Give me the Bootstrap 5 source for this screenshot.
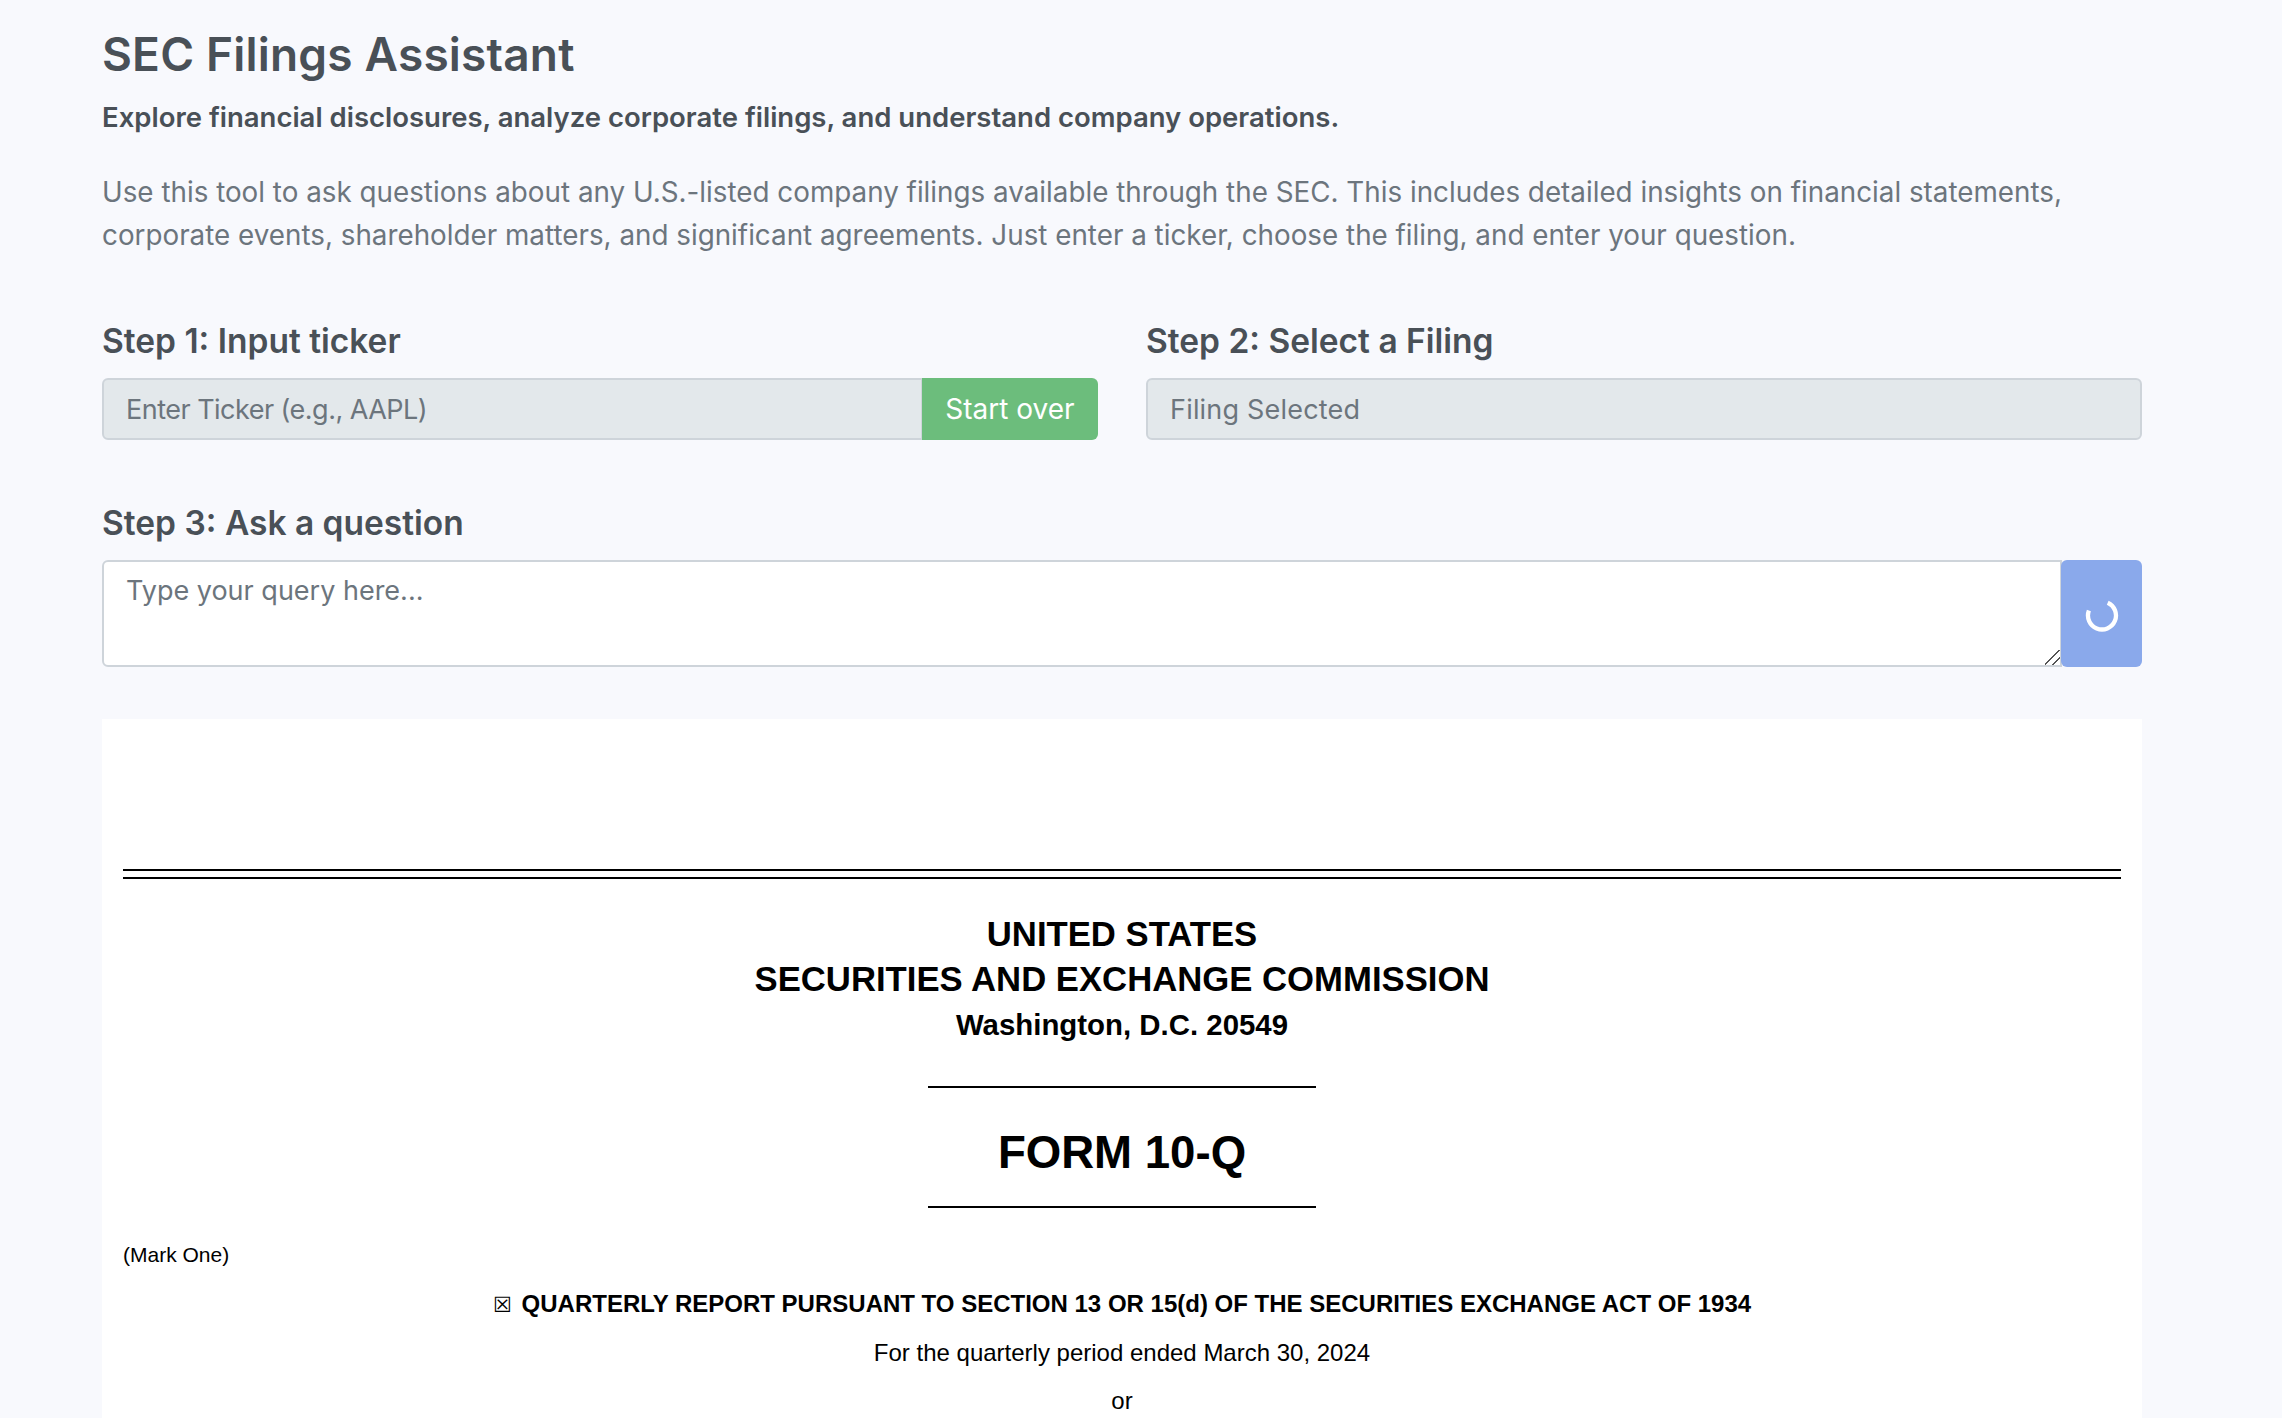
<!DOCTYPE html>
<html lang="en">
<head>
<meta charset="utf-8">
<title>SEC Filings Assistant</title>
<link href="https://cdn.jsdelivr.net/npm/bootstrap@5.3.0/dist/css/bootstrap.min.css" rel="stylesheet">
<style>
html,body{height:100%;overflow:hidden}
body{background:#f8f9fd;font-family:Inter,"Noto Sans",sans-serif;color:#495057}
.page-wrap{padding:0 140px 0 102px;height:100vh}
.app-title{font-size:46px;font-weight:600;line-height:48px;margin:0;padding-top:30px;color:#495057;letter-spacing:.2px}
.app-sub{font-size:27.5px;font-weight:600;line-height:38px;margin:20px 0 0;color:#495057}
.app-desc{font-size:27.8px;line-height:43px;margin:35px 0 0;color:#6c757d}
.steps{--bs-gutter-x:48px;margin-top:63px}
.step-label{font-size:33.5px;font-weight:600;line-height:42px;margin-bottom:16px;color:#495057;display:block}
.step-input{height:62px;font-size:27px;padding:0 22px;background:#e3e8eb;border-color:#ced4da;border-width:2px;color:#6c757d;border-radius:6px}
.step-input::placeholder,.step-text::placeholder{color:#6c757d;opacity:1}
.step-input:disabled{background:#e3e8eb}
.ticker-input::placeholder{letter-spacing:-.52px}
.filing-input::placeholder{letter-spacing:.2px}
.btn-over{background:#6cbd7c;border:0;color:#fff;font-size:28px;width:176px;height:62px;padding:0;border-radius:0 6px 6px 0;opacity:1;flex-shrink:0}
.step-three{margin-top:62px}
.step-text{height:107px;font-size:27px;padding:9px 22px;border:2px solid #ced4da;background:#fff;border-radius:6px 0 0 6px}
.step-text::-webkit-resizer{background:linear-gradient(135deg,transparent 46%,#555 46%,#555 53%,transparent 53%,transparent 72%,#555 72%,#555 79%,transparent 79%)}
.btn-ask{width:81px;height:107px;margin-left:-1px;background:#8aa9eb;border:0;padding:0;border-radius:6px;opacity:1;flex-shrink:0}
.btn-ask:disabled{background:#8aa9eb;opacity:1}
.filing-box{background:#fff;margin-top:52px;padding:150px 21px 0;font-family:"Liberation Sans",Arial,sans-serif;color:#000;min-height:0;overflow:hidden}
.rule-double{border-top:2px solid #000;border-bottom:2px solid #000;height:10px}
.doc-head{margin-top:33px}
.doc-h1{font-size:34.7px;font-weight:700;line-height:45px;margin:0}
.doc-h2{font-size:29.4px;font-weight:700;line-height:45px;margin:0}
.rule-short{width:388px;border-top:2px solid #000;margin:0 auto}
.rule-first{margin-top:39px}
.doc-form{font-size:45.6px;font-weight:700;line-height:58px;margin:36px 0 24px}
.doc-plain{font-size:24px;line-height:48px;margin:0}
.doc-bold{font-size:24px;font-weight:700;line-height:48px;margin:12px 0 0}
.doc-mark{font-size:21px;line-height:26px;margin:34px 0 0}
.check-glyph{font-weight:400;font-size:21px;margin-right:3px}
</style>
</head>
<body>
<main class="page-wrap d-flex flex-column">
  <h1 class="app-title">SEC Filings Assistant</h1>
  <p class="app-sub">Explore financial disclosures, analyze corporate filings, and understand company operations.</p>
  <p class="app-desc">Use this tool to ask questions about any U.S.-listed company filings available through the SEC. This includes detailed insights on financial statements, corporate events, shareholder matters, and significant agreements. Just enter a ticker, choose the filing, and enter your question.</p>

  <div class="row steps">
    <div class="col-6">
      <label class="step-label" for="ticker">Step 1: Input ticker</label>
      <div class="input-group">
        <input id="ticker" class="form-control step-input ticker-input" placeholder="Enter Ticker (e.g., AAPL)" disabled>
        <button class="btn btn-over" type="button">Start over</button>
      </div>
    </div>
    <div class="col-6">
      <label class="step-label" for="filing">Step 2: Select a Filing</label>
      <input id="filing" class="form-control step-input filing-input" placeholder="Filing Selected" disabled>
    </div>
  </div>

  <div class="step-three">
    <label class="step-label" for="query">Step 3: Ask a question</label>
    <div class="d-flex">
      <textarea id="query" class="form-control step-text flex-grow-1" placeholder="Type your query here..."></textarea>
      <button class="btn btn-ask d-flex align-items-center justify-content-center" type="button" disabled aria-label="Loading">
        <svg width="36" height="36" viewBox="0 -1.5 36 36" fill="none"><path d="M4.9 13A14 14 0 1 0 23.7 5.2" stroke="#fff" stroke-width="4.3"/></svg>
      </button>
    </div>
  </div>

  <section class="filing-box flex-grow-1">
    <div class="rule-double"></div>
    <div class="text-center doc-head">
      <p class="doc-h1">UNITED STATES</p>
      <p class="doc-h1">SECURITIES AND EXCHANGE COMMISSION</p>
      <p class="doc-h2">Washington, D.C. 20549</p>
    </div>
    <div class="rule-short rule-first"></div>
    <p class="doc-form text-center">FORM 10-Q</p>
    <div class="rule-short"></div>
    <p class="doc-mark">(Mark One)</p>
    <p class="doc-bold text-center"><span class="check-glyph">☒</span> QUARTERLY REPORT PURSUANT TO SECTION 13 OR 15(d) OF THE SECURITIES EXCHANGE ACT OF 1934</p>
    <p class="doc-plain text-center">For the quarterly period ended March 30, 2024</p>
    <p class="doc-plain text-center">or</p>
  </section>
</main>
<script src="https://cdn.jsdelivr.net/npm/bootstrap@5.3.0/dist/js/bootstrap.bundle.min.js"></script>
</body>
</html>
